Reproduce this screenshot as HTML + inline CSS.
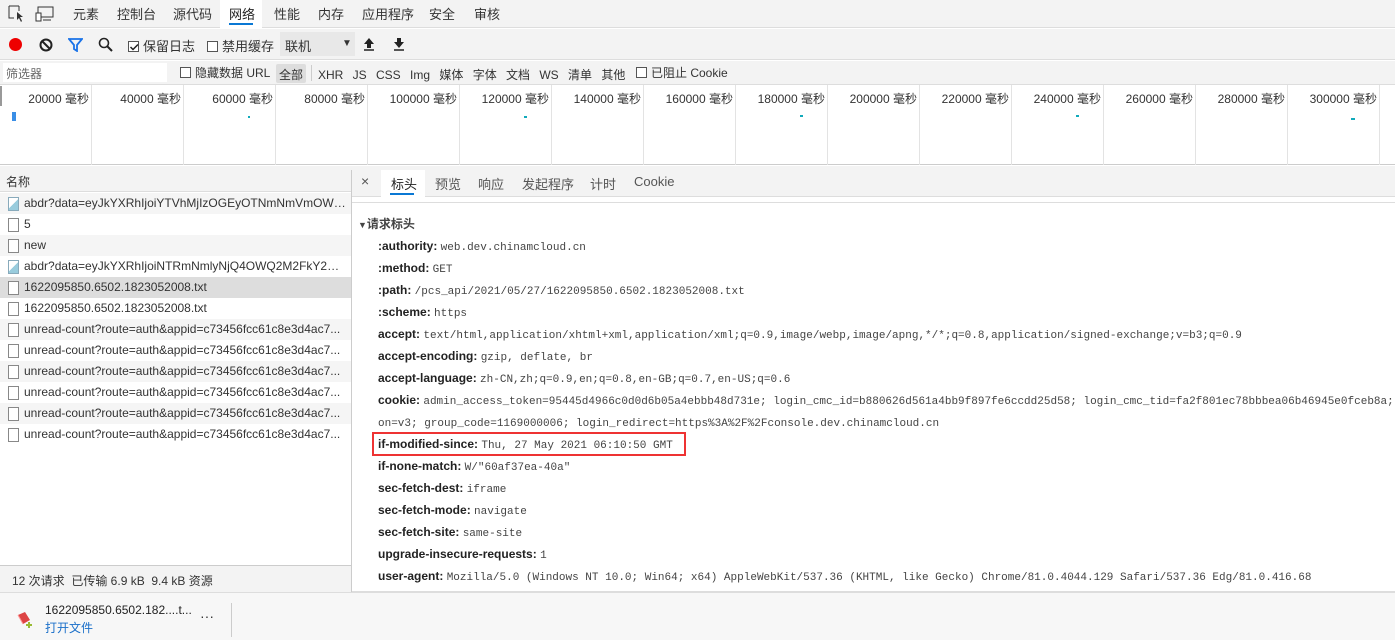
<!DOCTYPE html>
<html><head><meta charset="utf-8"><style>
*{margin:0;padding:0;box-sizing:border-box}
body{width:1395px;height:640px;overflow:hidden;background:#fff;font:12px "Liberation Sans","Noto Sans CJK SC",sans-serif;color:#333;position:relative}
.a{position:absolute;white-space:nowrap}
.mono{font-family:"Liberation Mono",monospace;font-size:11px;color:#444}
.cb{display:inline-block;width:11px;height:11px;border:1px solid #555;vertical-align:-1px;margin-right:4px;background:#fff}
.row{position:absolute;left:0;width:351px;height:21px;line-height:21px;padding-left:24px;padding-right:4px;overflow:hidden;white-space:nowrap;text-overflow:ellipsis}
.row .ic{position:absolute;left:8px;top:4px;width:11px;height:14px;border:1px solid #888;background:#fff}
.h{position:absolute;left:378px;white-space:nowrap;line-height:14px}
.h b{color:#222;font-weight:bold}
</style></head><body>
<div class="a" style="left:0;top:0;width:1395px;height:28px;background:#f3f3f3;border-bottom:1px solid #ddd"></div>
<svg class="a" style="left:8px;top:5px" width="48" height="18"><path d="M1 1h10M1 1v12h5M11 1v5" stroke="#333" fill="none"/><path d="M9 7l6 5-3 0 2 4-1 1-2-4-2 2z" fill="#333"/><rect x="30" y="2" width="15" height="10" stroke="#333" fill="none"/><path d="M28 8h5v8h-5z" stroke="#333" fill="#fff"/><path d="M35 15h8" stroke="#333"/></svg>
<div class="a" style="left:73px;top:4px;font-size:13px">元素</div>
<div class="a" style="left:117px;top:4px;font-size:13px">控制台</div>
<div class="a" style="left:173px;top:4px;font-size:13px">源代码</div>
<div class="a" style="left:220px;top:0;width:42px;height:28px;background:#fff"></div>
<div class="a" style="left:229px;top:4px;font-size:13px;color:#222">网络</div>
<div class="a" style="left:229px;top:23px;width:24px;height:2px;background:#0a78d4"></div>
<div class="a" style="left:274px;top:4px;font-size:13px">性能</div>
<div class="a" style="left:318px;top:4px;font-size:13px">内存</div>
<div class="a" style="left:362px;top:4px;font-size:13px">应用程序</div>
<div class="a" style="left:429px;top:4px;font-size:13px">安全</div>
<div class="a" style="left:474px;top:4px;font-size:13px">审核</div>
<div class="a" style="left:0;top:29px;width:1395px;height:31px;background:#f3f3f3;border-bottom:1px solid #ddd"></div>
<div class="a" style="left:9px;top:38px;width:13px;height:13px;border-radius:50%;background:#e00"></div>
<svg class="a" style="left:39px;top:38px" width="14" height="14"><circle cx="7" cy="7" r="5.5" stroke="#222" stroke-width="2" fill="none"/><path d="M3 3l8 8" stroke="#222" stroke-width="2"/></svg>
<svg class="a" style="left:68px;top:38px" width="15" height="14"><path d="M1 1h13l-5 6v6l-3-2v-4z" stroke="#1a73e8" stroke-width="1.8" fill="none"/></svg>
<svg class="a" style="left:98px;top:37px" width="15" height="15"><circle cx="6" cy="6" r="4.5" stroke="#222" stroke-width="1.6" fill="none"/><path d="M9 9l5 5" stroke="#222" stroke-width="2"/></svg>
<div class="a" style="left:128px;top:36px;font-size:13px"><span class="cb" style="position:relative"><svg style="position:absolute;left:0;top:0" width="10" height="10"><path d="M1.5 5l2.5 2.5 5-5" stroke="#222" stroke-width="1.5" fill="none"/></svg></span>保留日志</div>
<div class="a" style="left:207px;top:36px;font-size:13px"><span class="cb"></span>禁用缓存</div>
<div class="a" style="left:280px;top:32px;width:75px;height:24px;background:#e8e8e8"></div>
<div class="a" style="left:285px;top:36px;font-size:13px">联机</div>
<div class="a" style="left:342px;top:38px;font-size:10px">▼</div>
<svg class="a" style="left:362px;top:37px" width="14" height="14"><path d="M7 1l5 6h-3v4h-4v-4h-3z" fill="#222"/><path d="M2 13h10" stroke="#222" stroke-width="1.5"/></svg>
<svg class="a" style="left:392px;top:37px" width="14" height="14"><path d="M7 11l5-6h-3v-4h-4v4h-3z" fill="#222"/><path d="M2 13h10" stroke="#222" stroke-width="1.5"/></svg>
<div class="a" style="left:0;top:61px;width:1395px;height:24px;background:#f3f3f3;border-bottom:1px solid #ddd"></div>
<div class="a" style="left:3px;top:63px;width:164px;height:19px;background:#fff"></div>
<div class="a" style="left:6px;top:65px;color:#666">筛选器</div>
<div class="a" style="left:180px;top:64px"><span class="cb"></span>隐藏数据 URL</div>
<div class="a" style="left:276px;top:64px;width:30px;height:19px;background:#ddd;border-radius:2px"></div>
<div class="a" style="left:279px;top:66px">全部</div>
<div class="a" style="left:311px;top:65px;width:1px;height:16px;background:#ccc"></div>
<div class="a" style="left:318px;top:66px;word-spacing:6px">XHR JS CSS Img 媒体 字体 文档 WS 清单 其他</div>
<div class="a" style="left:636px;top:64px"><span class="cb"></span>已阻止 Cookie</div>
<div class="a" style="left:0;top:85px;width:1395px;height:80px;background:#fff;border-bottom:1px solid #ccc"></div>
<div class="a" style="left:0;top:85px;width:1395px;height:80px;background:repeating-linear-gradient(90deg,transparent 0 91px,#e3e3e3 91px 92px)"></div>
<div class="a" style="left:0;top:86px;width:2px;height:20px;background:#999"></div>
<div id="tl"></div>
<div class="a" style="left:12px;top:112px;width:4px;height:9px;background:#3a8ee6"></div>
<div class="a" style="left:248px;top:116px;width:2px;height:2px;background:#1ab"></div>
<div class="a" style="left:524px;top:116px;width:3px;height:2px;background:#1ab"></div>
<div class="a" style="left:800px;top:115px;width:3px;height:2px;background:#1ab"></div>
<div class="a" style="left:1076px;top:115px;width:3px;height:2px;background:#1ab"></div>
<div class="a" style="left:1351px;top:118px;width:4px;height:2px;background:#1ab"></div>
<div class="a" style="left:0;top:166px;width:1395px;height:5px;background:#f3f3f3"></div>
<div class="a" style="left:0;top:170px;width:352px;height:422px;border:1px solid #ccc;border-top:none;border-left:none;background:#fff"></div>
<div class="a" style="left:0;top:170px;width:351px;height:22px;background:#f3f3f3;border-bottom:1px solid #ddd"></div>
<div class="a" style="left:6px;top:173px">名称</div>
<div class="row" style="top:193px;background:#f5f5f5"><span class="ic" style="border-color:#8ab;background:linear-gradient(135deg,#fff 50%,#9cd 50%)"></span>abdr?data=eyJkYXRhIjoiYTVhMjIzOGEyOTNmNmVmOWQ4OWQ4</div>
<div class="row" style="top:214px"><span class="ic"></span>5</div>
<div class="row" style="top:235px;background:#f5f5f5"><span class="ic"></span>new</div>
<div class="row" style="top:256px"><span class="ic" style="border-color:#8ab;background:linear-gradient(135deg,#fff 50%,#9cd 50%)"></span>abdr?data=eyJkYXRhIjoiNTRmNmlyNjQ4OWQ2M2FkY2VkZjQ4</div>
<div class="row" style="top:277px;background:#ddd"><span class="ic"></span>1622095850.6502.1823052008.txt</div>
<div class="row" style="top:298px"><span class="ic"></span>1622095850.6502.1823052008.txt</div>
<div class="row" style="top:319px;background:#f5f5f5"><span class="ic"></span>unread-count?route=auth&amp;appid=c73456fcc61c8e3d4ac7...</div>
<div class="row" style="top:340px"><span class="ic"></span>unread-count?route=auth&amp;appid=c73456fcc61c8e3d4ac7...</div>
<div class="row" style="top:361px;background:#f5f5f5"><span class="ic"></span>unread-count?route=auth&amp;appid=c73456fcc61c8e3d4ac7...</div>
<div class="row" style="top:382px"><span class="ic"></span>unread-count?route=auth&amp;appid=c73456fcc61c8e3d4ac7...</div>
<div class="row" style="top:403px;background:#f5f5f5"><span class="ic"></span>unread-count?route=auth&amp;appid=c73456fcc61c8e3d4ac7...</div>
<div class="row" style="top:424px"><span class="ic"></span>unread-count?route=auth&amp;appid=c73456fcc61c8e3d4ac7...</div>
<div class="a" style="left:0;top:565px;width:351px;height:27px;background:#f3f3f3;border-top:1px solid #ccc"></div>
<div class="a" style="left:12px;top:572px">12 次请求 &nbsp;已传输 6.9 kB &nbsp;9.4 kB 资源</div>
<div class="a" style="left:352px;top:170px;width:1043px;height:27px;background:#f3f3f3;border-bottom:1px solid #ddd"></div>
<div class="a" style="left:361px;top:173px;font-size:14px;color:#555">×</div>
<div class="a" style="left:381px;top:170px;width:44px;height:27px;background:#fff"></div>
<div class="a" style="left:391px;top:174px;font-size:13px;color:#222">标头</div>
<div class="a" style="left:390px;top:193px;width:24px;height:2px;background:#0a78d4"></div>
<div class="a" style="left:435px;top:174px;font-size:13px;color:#555">预览</div>
<div class="a" style="left:478px;top:174px;font-size:13px;color:#555">响应</div>
<div class="a" style="left:522px;top:174px;font-size:13px;color:#555">发起程序</div>
<div class="a" style="left:590px;top:174px;font-size:13px;color:#555">计时</div>
<div class="a" style="left:634px;top:174px;font-size:13px;color:#555">Cookie</div>
<div class="a" style="left:352px;top:202px;width:1043px;height:1px;background:#ddd"></div>
<div class="a" style="left:358px;top:215px;font-weight:bold;color:#444"><span style="font-size:9px">▼</span>请求标头</div>
<div class="h" style="top:239px"><b>:authority:</b> <span class="mono">web.dev.chinamcloud.cn</span></div>
<div class="h" style="top:261px"><b>:method:</b> <span class="mono">GET</span></div>
<div class="h" style="top:283px"><b>:path:</b> <span class="mono">/pcs_api/2021/05/27/1622095850.6502.1823052008.txt</span></div>
<div class="h" style="top:305px"><b>:scheme:</b> <span class="mono">https</span></div>
<div class="h" style="top:327px"><b>accept:</b> <span class="mono">text/html,application/xhtml+xml,application/xml;q=0.9,image/webp,image/apng,*/*;q=0.8,application/signed-exchange;v=b3;q=0.9</span></div>
<div class="h" style="top:349px"><b>accept-encoding:</b> <span class="mono">gzip, deflate, br</span></div>
<div class="h" style="top:371px"><b>accept-language:</b> <span class="mono">zh-CN,zh;q=0.9,en;q=0.8,en-GB;q=0.7,en-US;q=0.6</span></div>
<div class="h" style="top:393px"><b>cookie:</b> <span class="mono">admin_access_token=95445d4966c0d0d6b05a4ebbb48d731e; login_cmc_id=b880626d561a4bb9f897fe6ccdd25d58; login_cmc_tid=fa2f801ec78bbbea06b46945e0fceb8a;</span></div>
<div class="h" style="top:415px"><span class="mono">on=v3; group_code=1169000006; login_redirect=https%3A%2F%2Fconsole.dev.chinamcloud.cn</span></div>
<div class="a" style="left:372px;top:432px;width:314px;height:24px;border:2px solid #e33"></div>
<div class="h" style="top:437px"><b>if-modified-since:</b> <span class="mono">Thu, 27 May 2021 06:10:50 GMT</span></div>
<div class="h" style="top:459px"><b>if-none-match:</b> <span class="mono">W/"60af37ea-40a"</span></div>
<div class="h" style="top:481px"><b>sec-fetch-dest:</b> <span class="mono">iframe</span></div>
<div class="h" style="top:503px"><b>sec-fetch-mode:</b> <span class="mono">navigate</span></div>
<div class="h" style="top:525px"><b>sec-fetch-site:</b> <span class="mono">same-site</span></div>
<div class="h" style="top:547px"><b>upgrade-insecure-requests:</b> <span class="mono">1</span></div>
<div class="h" style="top:569px"><b>user-agent:</b> <span class="mono">Mozilla/5.0 (Windows NT 10.0; Win64; x64) AppleWebKit/537.36 (KHTML, like Gecko) Chrome/81.0.4044.129 Safari/537.36 Edg/81.0.416.68</span></div>
<div class="a" style="left:352px;top:591px;width:1043px;height:1px;background:#ddd"></div>
<div class="a" style="left:0;top:592px;width:1395px;height:48px;background:#f7f7f7;border-top:1px solid #ddd"></div>
<svg class="a" style="left:15px;top:611px" width="18" height="18"><path d="M3 4l7-3 5 8-7 4z" fill="#d44"/><path d="M3 4l5 9" stroke="#f99"/><path d="M11 14h6M14 11v6" stroke="#9b3" stroke-width="2"/></svg>
<div class="a" style="left:45px;top:603px;color:#222">1622095850.6502.182....t...</div>
<div class="a" style="left:45px;top:619px;color:#1a6fc9">打开文件</div>
<div class="a" style="left:200px;top:608px;font-size:14px">···</div>
<div class="a" style="left:231px;top:603px;width:1px;height:34px;background:#ccc"></div>
<script>
var s='';for(var i=1;i<=15;i++){s+='<div class="a" style="left:'+(i*92-92)+'px;top:90px;width:89px;text-align:right;color:#333">'+(i*20000)+' 毫秒</div>';}
document.getElementById('tl').innerHTML=s;
</script>
</body></html>
